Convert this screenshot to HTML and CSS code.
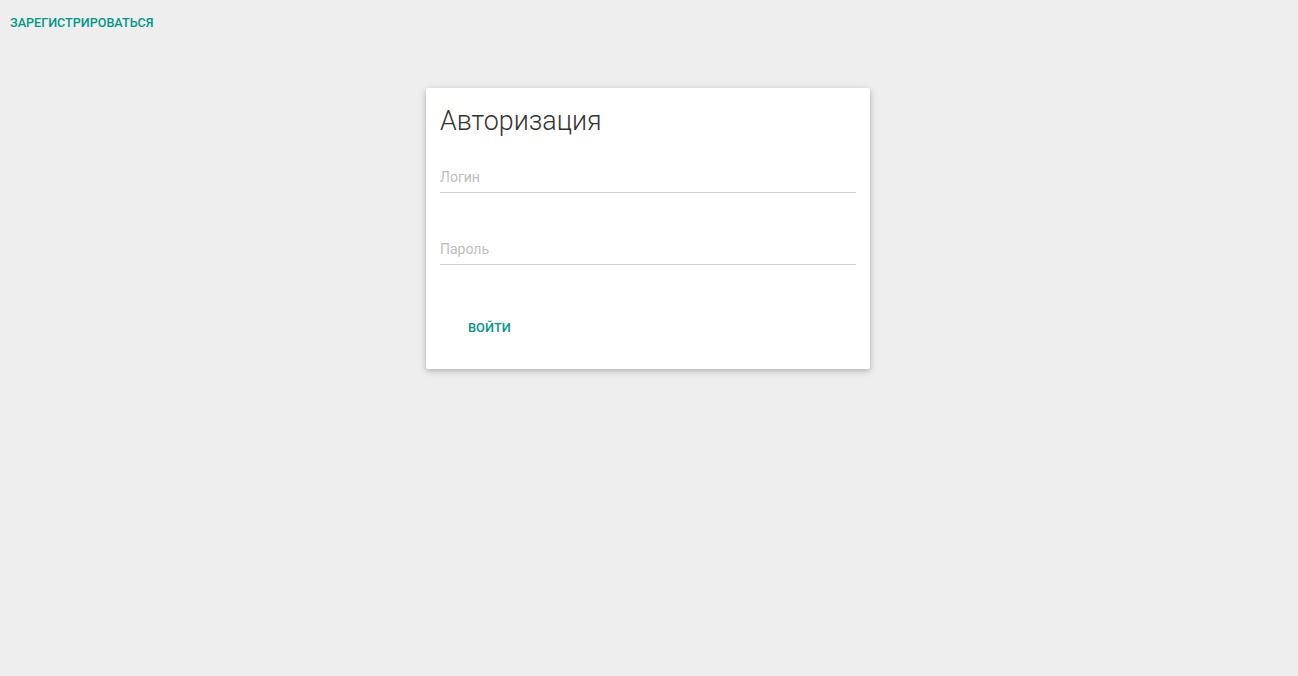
FILE: index.html
```html
<!DOCTYPE html>
<html lang="ru">
<head>
<meta charset="utf-8">
<title>Авторизация</title>
<link rel="stylesheet" href="styles.css">
</head>
<body>
<header class="top">
  <a class="register" href="#">ЗАРЕГИСТРИРОВАТЬСЯ</a>
</header>
<main class="wrap">
  <form class="card">
    <h1 class="title">Авторизация</h1>
    <div class="field">
      <input class="input" type="text" placeholder="Логин">
    </div>
    <div class="field field-second">
      <input class="input" type="password" placeholder="Пароль">
    </div>
    <div class="actions">
      <button class="btn" type="button">ВОЙТИ</button>
    </div>
  </form>
</main>
</body>
</html>
```
FILE: styles.css
```css
html, body {
  margin: 0;
  padding: 0;
  background: #eeeeee;
  font-family: Roboto, "Liberation Sans", sans-serif;
  height: 100%;
}
.top {
  padding: 12px 10px 0;
  height: 73px;
  box-sizing: border-box;
}
.register {
  color: #009688;
  font-size: 12.6px;
  font-weight: 500;
  text-decoration: none;
  line-height: 14px;
  display: inline-block;
}
.wrap {
  display: flex;
  justify-content: center;
  padding-top: 15px;
  padding-right: 2px;
}
.card {
  width: 444px;
  height: 281px;
  box-sizing: border-box;
  background: #fff;
  border-radius: 2px;
  box-shadow: 0 2px 5px rgba(0,0,0,0.16), 0 2px 10px rgba(0,0,0,0.12);
  padding: 14px 14px 0;
}
.title {
  margin: 0;
  font-size: 26.8px;
  font-weight: 300;
  color: #333;
  line-height: 38px;
}
.field {
  margin-top: 26px;
}
.field-second {
  margin-top: 45px;
}
.input {
  display: block;
  width: 100%;
  box-sizing: border-box;
  border: none;
  border-bottom: 1px solid #cfcfcf;
  outline: none;
  background: transparent;
  font-family: Roboto, "Liberation Sans", sans-serif;
  font-size: 14px;
  padding: 0 0 5px;
  height: 27px;
  color: #333;
}
.input::placeholder {
  color: #bdbdbd;
}
.actions {
  margin-top: 44px;
  padding-left: 12px;
}
.btn {
  background: transparent;
  border: none;
  color: #009688;
  font-family: Roboto, "Liberation Sans", sans-serif;
  font-size: 12.8px;
  font-weight: 500;
  padding: 0 16px;
  height: 36px;
  cursor: pointer;
}
```
